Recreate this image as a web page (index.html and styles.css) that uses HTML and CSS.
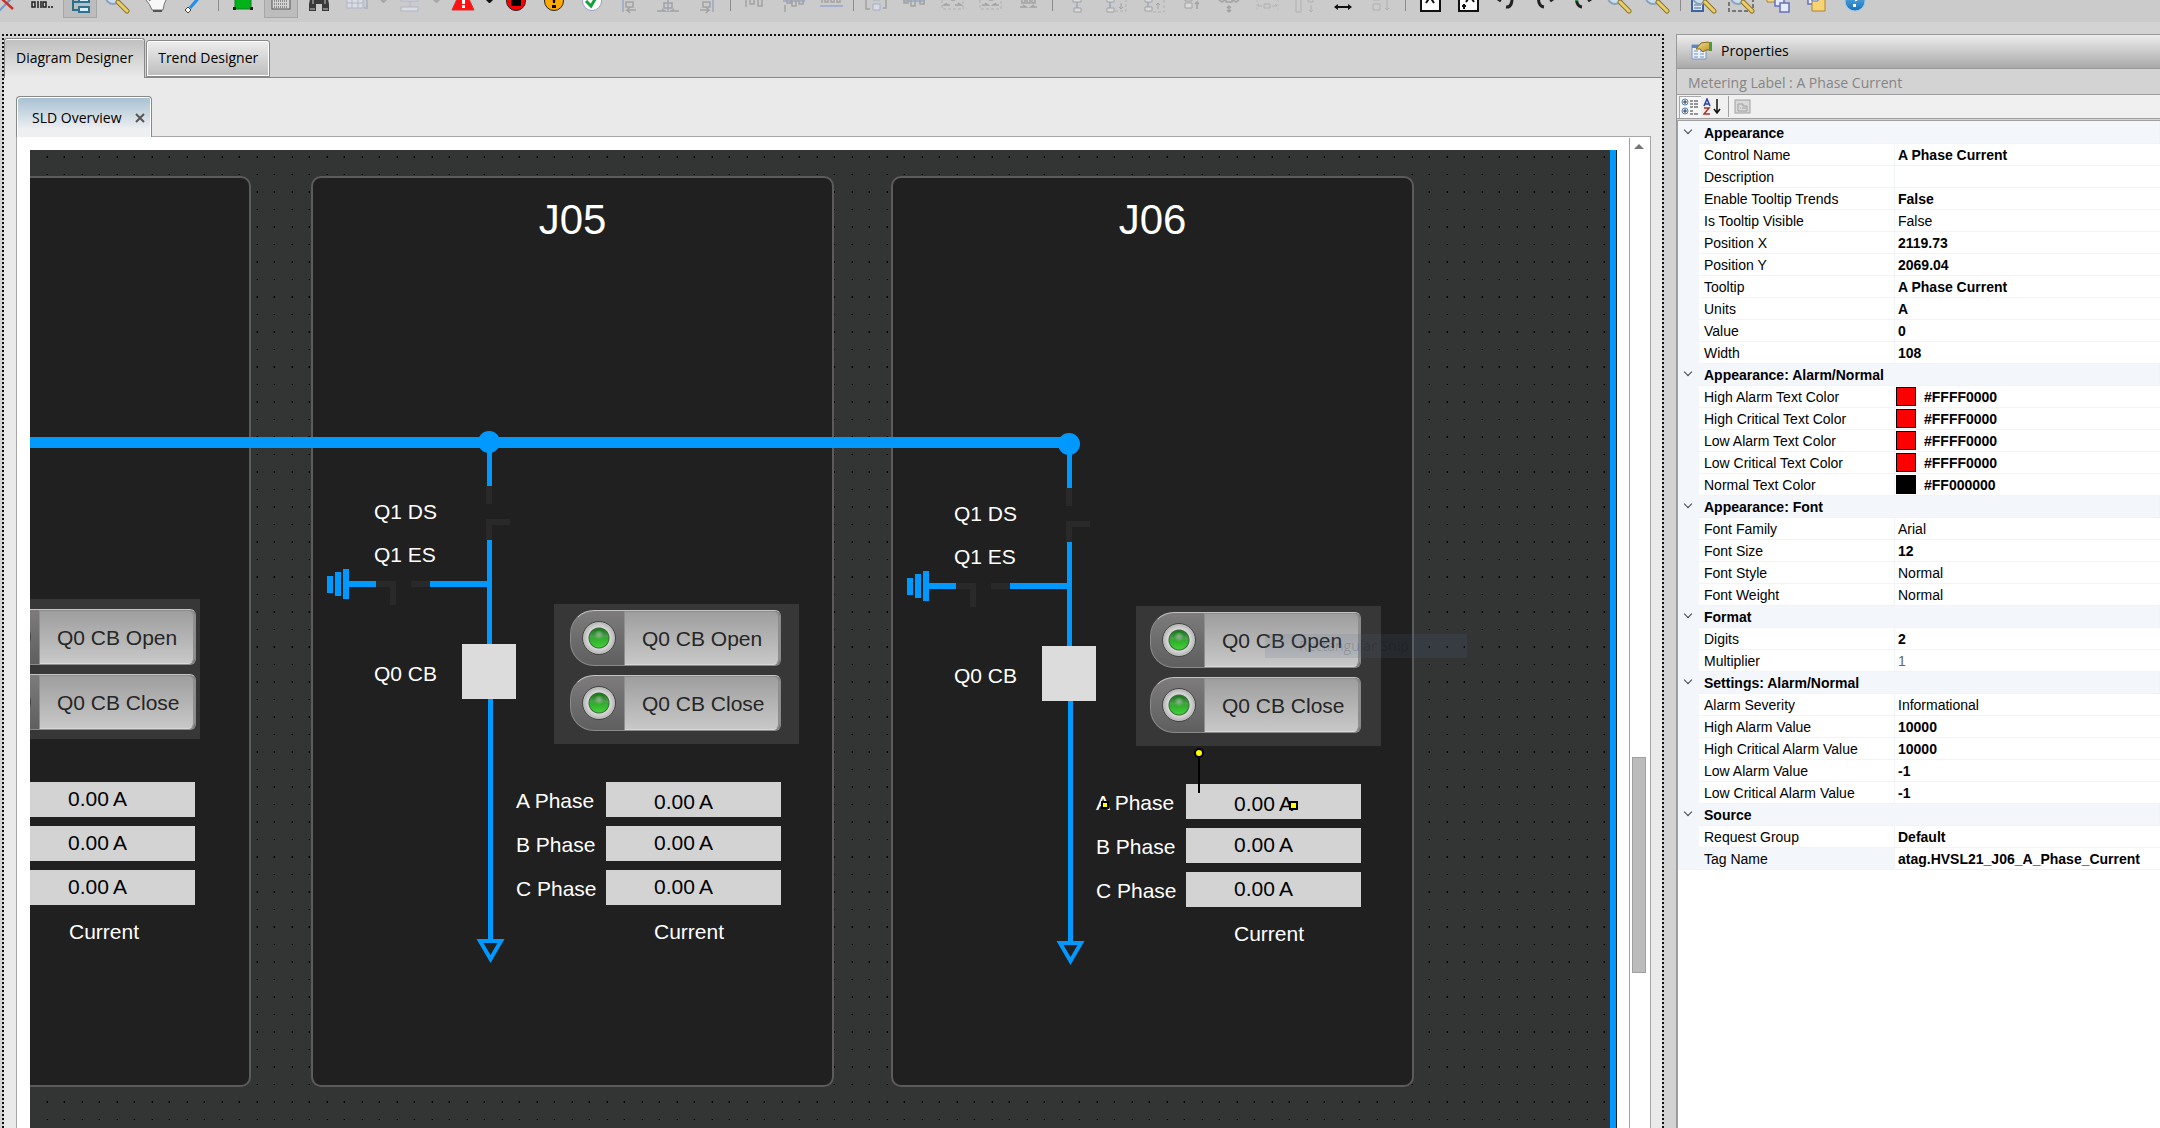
FILE: index.html
```html
<!DOCTYPE html>
<html lang="en">
<head>
<meta charset="utf-8">
<title>Diagram Designer</title>
<link rel="stylesheet" href="styles.css">
</head>
<body>
<svg class="defs" aria-hidden="true">
  <defs>
    <linearGradient id="gold" x1="0" y1="0" x2="1" y2="1"><stop offset="0" stop-color="#f3df8c"/><stop offset="1" stop-color="#b98f25"/></linearGradient>
    <linearGradient id="helpBlue" x1="0" y1="0" x2="0" y2="1"><stop offset="0" stop-color="#6db8ea"/><stop offset="1" stop-color="#1670b8"/></linearGradient>
    <g id="lens">
      <circle cx="9" cy="-3" r="7" fill="#c9def0" stroke="#8ea3b8" stroke-width="2"/>
      <path d="M14 2 L23 11" stroke="#8f7428" stroke-width="5" stroke-linecap="round"/>
      <path d="M14 2 L23 11" stroke="#e8cf6a" stroke-width="3" stroke-linecap="round"/>
    </g>
    <g id="page">
      <rect x="5" y="-14" width="19" height="25" fill="#fff" stroke="#111" stroke-width="2"/>
    </g>
    <g id="feeder" shape-rendering="crispEdges">
      <path class="off" d="M173 308h6v18h-6zM173 341h24v6h-18v15h-6zM98 403h19v6h-19zM63 403h20v24h-6v-18h-14z"/>
      <path class="live" d="M174 264h5v44h-5zM174 362h5v104h-5zM117 403h58v6h-58zM36 403h27v6h-27zM30 391h6v30h-6zM22 394h6v24h-6zM14 398h6v17h-6zM175 521h5v240h-5z"/>
      <rect class="breaker" x="149" y="466" width="54" height="55"/>
      <path class="arrow" d="M167 763h21l-10.500 18z" shape-rendering="auto"/>
    </g>
  </defs>
</svg>

<header class="toolbar" role="toolbar" aria-label="Diagram tools">
  <button class="tool" aria-label="Delete"><svg viewBox="0 0 28 22"><path d="M8 12L22 -2" stroke="#7a9cc8" stroke-width="2"/><path d="M12 -1L23 9" stroke="#c8312b" stroke-width="2.500"/><path d="M18 1l4-4" stroke="#888" stroke-width="2"/></svg></button>
  <button class="tool" aria-label="Bits"><svg viewBox="0 0 28 22"><g fill="none" stroke="#222" stroke-width="1.500"><rect x="4" y="2" width="3" height="5"/><path d="M10 1v7M13 1v7"/><rect x="15" y="2" width="3" height="5"/></g><path d="M20 6h2v2h-2zM23 6h2v2h-2z" fill="#444"/></svg></button>
  <button class="tool on" aria-label="Tree"><svg viewBox="0 0 28 22"><path d="M7 -4V10h6M7 2h6" fill="none" stroke="#2c6f8c" stroke-width="2"/><g fill="#d9eef5" stroke="#2c7391" stroke-width="2"><rect x="13" y="-3" width="10" height="5"/><rect x="13" y="7" width="10" height="5"/></g></svg></button>
  <button class="tool" aria-label="Find"><svg viewBox="0 0 28 22"><use href="#lens"/></svg></button>
  <button class="tool" aria-label="Pan"><svg viewBox="0 0 28 22"><path d="M4 0q2-2 4 1V-6H24V0q-2 3-3 10H10Q8 4 4 0z" fill="#f8f8f8" stroke="#777"/><path d="M11 11h9" stroke="#555" stroke-width="2"/></svg></button>
  <button class="tool" aria-label="Line"><svg viewBox="0 0 28 22"><path d="M10 8L22 -6" stroke="#1b8ff0" stroke-width="3"/><path d="M8 7l3 3-3 3-3-3z" fill="#fff" stroke="#444"/></svg></button>
  <span class="sep"></span>
  <button class="tool" aria-label="Shape"><svg viewBox="0 0 28 22"><path d="M6 -6h16V9H6z" fill="#00b21a" stroke="#157a20"/><path d="M4 7h3v3H4zM21 7h3v3h-3z" fill="#222"/></svg></button>
  <button class="tool on" aria-label="Grid"><svg viewBox="0 0 28 22"><rect x="5" y="-10" width="18" height="19" fill="#d4d4d4" stroke="#555"/><path d="M7 1h14M7 4h14M7 7h14" stroke="#444" stroke-dasharray="1 1"/></svg></button>
  <button class="tool" aria-label="Search"><svg viewBox="0 0 28 22"><path d="M6 -6h6v5h4v-5h6l2 10v7h-7V4h-6v7H4V4z" fill="#3a3a3a"/><path d="M5 9h5M18 9h5M8 0v4M20 0v4" stroke="#999" stroke-width="1.500"/></svg></button>
  <button class="tool dim" aria-label="Table"><svg viewBox="0 0 28 22"><path d="M4 -6h16V8H4zM4 3h16M9 -6V8M15 -6V8" fill="#dde1ea" stroke="#a9b1c4"/><path d="M24 -4v12h-3" stroke="#a9b1c4" fill="none" stroke-width="2"/></svg></button>
  <span class="drop"></span>
  <button class="tool dim" aria-label="Rows"><svg viewBox="0 0 28 22"><g fill="#dde1ea" stroke="#a9b1c4"><rect x="5" y="-3" width="17" height="4"/><rect x="5" y="7" width="17" height="4"/></g><path d="M14 1v6" stroke="#a9b1c4"/></svg></button>
  <span class="drop"></span>
  <button class="tool" aria-label="Alarm"><svg viewBox="0 0 28 22"><path d="M14 -14L25 10H3z" fill="#f11" stroke="#c33"/><path d="M13 -4h3v8h-3zM13 5h3v3h-3z" fill="#fff"/></svg></button>
  <span class="drop drop-strong"></span>
  <button class="tool" aria-label="Stop"><svg viewBox="0 0 28 22"><circle cx="14" cy="1" r="9.500" fill="#f00" stroke="#222"/><path d="M9 -3h10v9H9z"/></svg></button>
  <button class="tool" aria-label="Warning"><svg viewBox="0 0 28 22"><circle cx="14" cy="1" r="9.500" fill="#ffa800" stroke="#222"/><path d="M12 -8h4l-1 11h-2zM12 5h4v3h-4z"/></svg></button>
  <button class="tool" aria-label="Validate"><svg viewBox="0 0 28 22"><circle cx="14" cy="1" r="9.500" fill="#fff" stroke="#9b9bd0"/><path d="M8 1l5 5L19 -4" fill="none" stroke="#12a33a" stroke-width="3"/></svg></button>
  <button class="tool dim" aria-label="Align left"><svg viewBox="0 0 28 22"><path d="M7 -4V12" stroke="#9ac" stroke-width="2"/><path d="M10 2h7v5h-7zM20 10h-9l3-3M11 10l3 3" fill="none" stroke="#999" stroke-width="1.500"/></svg></button>
  <button class="tool dim" aria-label="Align centre"><svg viewBox="0 0 28 22"><path d="M14 -4V12" stroke="#9ac" stroke-width="2"/><path d="M10 3h8v5h-8zM3 11h8l-3-2M25 11h-8l3-2" fill="none" stroke="#999" stroke-width="1.500"/></svg></button>
  <button class="tool dim" aria-label="Align right"><svg viewBox="0 0 28 22"><path d="M21 -4V12" stroke="#9ac" stroke-width="2"/><path d="M11 2h7v5h-7zM8 10h9l-3-3M17 10l-3 3" fill="none" stroke="#999" stroke-width="1.500"/></svg></button>
  <span class="sep"></span>
  <button class="tool dim" aria-label="Align top"><svg viewBox="0 0 28 22"><path d="M5 -4V7M9 -6V4h4V-6M17 -6V6h4V-6" fill="none" stroke="#999" stroke-width="1.500"/></svg></button>
  <button class="tool dim" aria-label="Align middle"><svg viewBox="0 0 28 22"><path d="M4 1h22" stroke="#9ac" stroke-width="2"/><path d="M6 12V5M8 -4V3h4V-4M13 -4V6h4V-4M20 -4V4h4V-4" fill="none" stroke="#999" stroke-width="1.500"/></svg></button>
  <button class="tool dim" aria-label="Align bottom"><svg viewBox="0 0 28 22"><path d="M3 6h23" stroke="#9ac" stroke-width="2"/><path d="M5 -4V3M8 -4V2h3V-4M14 -4V2h3V-4M20 -4V2h3V-4" fill="none" stroke="#999" stroke-width="1.500"/></svg></button>
  <span class="sep tight"></span>
  <button class="tool dim" aria-label="Distribute"><svg viewBox="0 0 28 22"><path d="M11 4h7v6h-7zM11 -5h7v5h-7z" fill="#dde" stroke="#9ab"/><path d="M7 -4H4V9h4M21 8h3V-4" fill="none" stroke="#999" stroke-width="1.500"/></svg></button>
  <button class="tool dim" aria-label="Distribute across"><svg viewBox="0 0 28 22"><path d="M4 1h21" stroke="#9ac" stroke-width="2"/><path d="M4 -4V3h4V-4M11 -4V6h4V-4M20 -4V4h4V-4" fill="none" stroke="#999" stroke-width="1.500"/></svg></button>
  <button class="tool dim" aria-label="Space across"><svg viewBox="0 0 28 22"><path d="M4 0V9h21V0" fill="none" stroke="#aaa" stroke-dasharray="3 2"/><path d="M12 5H6l3-2M17 5h6l-3-2M13 0h4" fill="none" stroke="#999" stroke-width="1.500"/></svg></button>
  <button class="tool dim" aria-label="Space evenly"><svg viewBox="0 0 28 22"><path d="M4 0V9h21V0" fill="none" stroke="#aaa" stroke-dasharray="3 2"/><path d="M6 5h6l-3-2M23 5h-6l3-2M13 0h4" fill="none" stroke="#999" stroke-width="1.500"/></svg></button>
  <button class="tool dim" aria-label="Squeeze"><svg viewBox="0 0 28 22"><path d="M6 7h6l-3-2M23 7h-6l3-2M8 -3V3h3V-3M13 -3V3h3V-3M18 -3V3h3V-3" fill="none" stroke="#999" stroke-width="1.500"/></svg></button>
  <span class="sep"></span>
  <button class="tool dim" aria-label="Stack"><svg viewBox="0 0 28 22"><path d="M14 0v9" stroke="#9ac" stroke-width="2"/><path d="M10 -3h8v5h-8zM11 8h7v4h-7z" fill="#ddd" stroke="#999"/></svg></button>
  <button class="tool dim" aria-label="Stack down"><svg viewBox="0 0 28 22"><path d="M9 0v9" stroke="#9ac" stroke-width="2"/><path d="M6 -3h7v5H6zM6 8h7v4H6z" fill="#ddd" stroke="#999"/><path d="M14 11h11V0" fill="none" stroke="#aaa" stroke-dasharray="3 2"/><path d="M20 3v6l-2-2M20 9l2-2" fill="none" stroke="#999"/></svg></button>
  <button class="tool dim" aria-label="Stack up"><svg viewBox="0 0 28 22"><path d="M9 0v9" stroke="#9ac" stroke-width="2"/><path d="M6 -3h7v5H6zM6 7h7v4H6z" fill="#ddd" stroke="#999"/><path d="M14 12h11V0" fill="none" stroke="#aaa" stroke-dasharray="3 2"/><path d="M19 9V3l-2 2M19 3l2 2" fill="none" stroke="#999"/></svg></button>
  <button class="tool dim" aria-label="Raise"><svg viewBox="0 0 28 22"><path d="M8 3h7v5H8zM8 -3h7v4H8z" fill="#ddd" stroke="#999"/><path d="M20 9V2l-2 2M20 2l2 2" fill="none" stroke="#999" stroke-width="1.500"/></svg></button>
  <button class="tool dim" aria-label="Compress"><svg viewBox="0 0 28 22"><path d="M4 0l3 2 3-2M18 0l3 2 3-2M14 6v6M12 8l2-2 2 2M12 10l2 2 2-2M11 -2v4h6v-4" fill="none" stroke="#999" stroke-width="1.500"/></svg></button>
  <button class="tool dim" aria-label="Spread"><svg viewBox="0 0 28 22"><path d="M11 4h6v4h-6zM9 6H4l2-2M19 6h5l-2-2" fill="none" stroke="#aaa"/><path d="M4 0v10M25 0v10" stroke="#bbb" stroke-dasharray="2 2"/></svg></button>
  <button class="tool dim" aria-label="Same height"><svg viewBox="0 0 28 22"><path d="M5 -4h5V12H5zM17 -3h5v5h-5zM20 5v7l-2-2M20 12l2-2" fill="none" stroke="#aaa"/></svg></button>
  <button class="tool" aria-label="Same width"><svg viewBox="0 0 28 22"><path d="M6 7h16" stroke="#111" stroke-width="2"/><path d="M9 4v6L5 7zM19 4v6l4-3z" fill="#111"/></svg></button>
  <button class="tool dim" aria-label="Same size"><svg viewBox="0 0 28 22"><path d="M6 4h7v6H6zM6 -4v4h7M20 0v10l-2-2M20 10l2-2" fill="none" stroke="#aaa"/></svg></button>
  <span class="sep"></span>
  <button class="tool" aria-label="Text"><svg viewBox="0 0 28 22"><use href="#page"/><path d="M10 3l4-6 4 6" fill="none" stroke="#111" stroke-width="2"/></svg></button>
  <button class="tool" aria-label="Text position"><svg viewBox="0 0 28 22"><use href="#page"/><path d="M12 2l4-6 4 6M10 9V4M8 6h4" fill="none" stroke="#111" stroke-width="2"/></svg></button>
  <button class="tool" aria-label="Undo"><svg viewBox="0 0 28 22"><path d="M6 -1l3 2M14 7Q21 8 20 -6" fill="none" stroke="#222" stroke-width="3"/></svg></button>
  <button class="tool" aria-label="Redo"><svg viewBox="0 0 28 22"><path d="M23 -1l-3 2M14 7Q7 6 9 -6" fill="none" stroke="#222" stroke-width="3"/></svg></button>
  <button class="tool" aria-label="Repeat"><svg viewBox="0 0 28 22"><path d="M23 -1l-3 2M14 7Q7 6 9 -6" fill="none" stroke="#222" stroke-width="3"/><path d="M7 -2h3v3H7z" fill="#1a3"/></svg></button>
  <button class="tool" aria-label="Zoom in"><svg viewBox="0 0 28 22"><use href="#lens"/><path d="M9 -6v6M6 -3h6" stroke="#246" stroke-width="2"/></svg></button>
  <button class="tool" aria-label="Zoom out"><svg viewBox="0 0 28 22"><use href="#lens"/></svg></button>
  <span class="sep tight"></span>
  <button class="tool" aria-label="Zoom page"><svg viewBox="0 0 28 22"><path d="M3 -6h11V11H3z" fill="#dfe8fa" stroke="#3d62ad" stroke-width="2"/><path d="M5 5h7M5 8h7" stroke="#3d62ad"/><use href="#lens" x="2"/></svg></button>
  <button class="tool" aria-label="Zoom region"><svg viewBox="0 0 28 22"><path d="M2 -4V11h24V-4" fill="none" stroke="#777" stroke-width="2" stroke-dasharray="4 2"/><use href="#lens" x="2"/></svg></button>
  <button class="tool" aria-label="Send back"><svg viewBox="0 0 28 22"><path d="M2 -6h12v8H2z" fill="#f5d77c" stroke="#a8843a"/><path d="M10 -2h9v8h-9z" fill="#e5eafc" stroke="#6672b5" stroke-width="1.500"/><path d="M15 3h9v9h-9z" fill="#e5eafc" stroke="#6672b5" stroke-width="1.500"/></svg></button>
  <button class="tool" aria-label="Bring front"><svg viewBox="0 0 28 22"><path d="M5 -6h9v10H5z" fill="#eef" stroke="#6672b5" stroke-width="1.500"/><path d="M9 -4h13v15H9z" fill="#f7d473" stroke="#a8843a"/><path d="M9 -6h6v7H9z" fill="#eef" stroke="#6672b5"/></svg></button>
  <button class="tool" aria-label="Help"><svg viewBox="0 0 28 22"><circle cx="14" cy="1" r="10" fill="url(#helpBlue)" stroke="#9cc9ec"/><path d="M11 -5q5-3 6 1q0 3-3 4" fill="none" stroke="#fff" stroke-width="3"/><path d="M12 4h3v3h-3z" fill="#fff"/></svg></button>
</header>

<main class="workbench">
  <section class="designer">
    <div class="tabs" role="tablist">
      <button class="tab active" role="tab" aria-selected="true">Diagram Designer</button>
      <button class="tab" role="tab">Trend Designer</button>
    </div>
    <div class="documents">
      <div class="doc-tab"><span>SLD Overview</span>
        <button class="close" aria-label="Close SLD Overview"><svg viewBox="0 0 10 10"><path d="M1 1l8 8M9 1l-8 8" stroke="#555" stroke-width="2"/></svg></button>
      </div>
      <div class="pane">
        <div class="canvas">
          <svg class="layer" aria-hidden="true">
            <pattern id="dots" width="35" height="35" patternUnits="userSpaceOnUse"><path d="M17 6h1v2h-1zM34 6h1v2h-1zM17 24h1v1h-1zM34 24h1v1h-1z" fill="#000"/><path d="M16 6h1v2h-1zM33 6h1v2h-1zM16 24h1v1h-1zM33 24h1v1h-1z" fill="#222"/></pattern>
            <rect width="100%" height="100%" fill="url(#dots)"/>
          </svg>

          <article class="bay bay-j04">
            <div class="commands">
              <button class="command"><i class="lamp"></i><span>Q0 CB Open</span></button>
              <button class="command"><i class="lamp"></i><span>Q0 CB Close</span></button>
            </div>
            <div class="readings">
              <span></span><output><b>0.00</b><b>A</b></output>
              <span></span><output><b>0.00</b><b>A</b></output>
              <span></span><output><b>0.00</b><b>A</b></output>
            </div>
            <span class="label label-current">Current</span>
          </article>

          <article class="bay bay-j05">
            <h2>J05</h2>
            <div class="equipment">
              <svg class="layer" aria-hidden="true"><use href="#feeder"/></svg>
              <span class="label label-ds">Q1 DS</span>
              <span class="label label-es">Q1 ES</span>
              <span class="label label-cb">Q0 CB</span>
              <div class="commands">
                <button class="command"><i class="lamp"></i><span>Q0 CB Open</span></button>
                <button class="command"><i class="lamp"></i><span>Q0 CB Close</span></button>
              </div>
              <div class="readings">
                <span>A Phase</span><output class="lowered"><b>0.00</b><b>A</b></output>
                <span>B Phase</span><output><b>0.00</b><b>A</b></output>
                <span>C Phase</span><output><b>0.00</b><b>A</b></output>
              </div>
              <span class="label label-current">Current</span>
            </div>
          </article>

          <article class="bay bay-j06">
            <h2>J06</h2>
            <div class="equipment">
              <svg class="layer" aria-hidden="true"><use href="#feeder"/></svg>
              <span class="label label-ds">Q1 DS</span>
              <span class="label label-es">Q1 ES</span>
              <span class="label label-cb">Q0 CB</span>
              <div class="commands">
                <button class="command"><i class="lamp"></i><span>Q0 CB Open</span></button>
                <button class="command"><i class="lamp"></i><span>Q0 CB Close</span></button>
              </div>
              <div class="readings">
                <span>A Phase</span><output class="lowered"><b>0.00</b><b>A</b></output>
                <span>B Phase</span><output><b>0.00</b><b>A</b></output>
                <span>C Phase</span><output><b>0.00</b><b>A</b></output>
              </div>
              <span class="label label-current">Current</span>
            </div>
          </article>

          <svg class="layer" aria-hidden="true">
            <path class="live" d="M0 287h1039v11H0z"/>
            <circle class="live" cx="459" cy="292" r="11"/>
            <circle class="live" cx="1039" cy="294" r="11"/>
            <path d="M1168 607h2v36h-2z"/>
            <g fill="#ff0" stroke="#000" stroke-width="2">
              <circle cx="1169" cy="603" r="4"/>
              <rect x="1072" y="652" width="6" height="6"/>
              <rect x="1260" y="652" width="7" height="7"/>
            </g>
          </svg>
          <div class="ghost">Rectangular Snip</div>
        </div>
        <div class="scrollbar"><i class="up"></i><i class="thumb"></i></div>
      </div>
    </div>
  </section>

  <aside class="properties">
    <header class="properties-title">
      <svg viewBox="0 0 22 20" width="22" height="20"><path d="M1 4h14v14H1z" fill="#eaf1fb" stroke="#7c93bd"/><path d="M1 4h14v3H1z" fill="#5d86c9"/><path d="M3 10h4M9 10h4M3 13h4M9 13h4M3 16h4M9 16h4" stroke="#9ab0d2" stroke-width="1.500"/><path d="M5 8l5-6 7-1 3 2v6h-5l-3 2-3-3z" fill="url(#gold)" stroke="#8a6a14"/><path d="M18 1h3v9h-3z" fill="#4a9c3a"/></svg>
      Properties
    </header>
    <p class="selection">Metering Label : A Phase Current</p>
    <div class="properties-tools">
      <button class="ptool pressed" aria-label="Categorized"><svg viewBox="0 0 18 18" width="18" height="18"><g fill="#fff" stroke="#4a7ebb"><circle cx="4" cy="4" r="3"/><circle cx="4" cy="13" r="3"/></g><path d="M2 4h4M4 2v4M2 13h4M4 11v4M9 3h3M9 6h3M9 9h3M9 13h3M9 16h3M13 3h4M13 6h4M13 9h4M13 16h4" stroke="#333"/></svg></button>
      <button class="ptool" aria-label="Alphabetical"><svg viewBox="0 0 18 18" width="18" height="18"><path d="M1 8l3-7 3 7M2 6h4" fill="none" stroke="#2a3fa8" stroke-width="1.500"/><path d="M1 10h5l-5 6h6" fill="none" stroke="#a8322a" stroke-width="1.500"/><path d="M14 1v14M11 11l3 4 3-4" fill="none" stroke="#111" stroke-width="1.500"/></svg></button>
      <span class="ptool-sep"></span>
      <button class="ptool" aria-label="Property pages"><svg viewBox="0 0 18 18" width="18" height="18"><rect x="1" y="2" width="15" height="13" fill="#d9d9d9" stroke="#a0a0a0"/><path d="M4 6h5v2h4v5H4zM6 10h1M8 10h4" fill="none" stroke="#a0a0a0"/></svg></button>
    </div>
    <div class="grid-wrap">
      <table class="grid">
        <colgroup><col class="gutter"><col class="name"><col></colgroup>
        <tbody>
          <tr class="cat"><td><i class="chevron"></i></td><th colspan="2">Appearance</th></tr>
          <tr><td></td><th>Control Name</th><td><b>A Phase Current</b></td></tr>
          <tr><td></td><th>Description</th><td></td></tr>
          <tr><td></td><th>Enable Tooltip Trends</th><td><b>False</b></td></tr>
          <tr><td></td><th>Is Tooltip Visible</th><td>False</td></tr>
          <tr><td></td><th>Position X</th><td><b>2119.73</b></td></tr>
          <tr><td></td><th>Position Y</th><td><b>2069.04</b></td></tr>
          <tr><td></td><th>Tooltip</th><td><b>A Phase Current</b></td></tr>
          <tr><td></td><th>Units</th><td><b>A</b></td></tr>
          <tr><td></td><th>Value</th><td><b>0</b></td></tr>
          <tr><td></td><th>Width</th><td><b>108</b></td></tr>
        </tbody>
        <tbody>
          <tr class="cat"><td><i class="chevron"></i></td><th colspan="2">Appearance: Alarm/Normal</th></tr>
          <tr><td></td><th>High Alarm Text Color</th><td class="color"><i class="swatch red"></i><b>#FFFF0000</b></td></tr>
          <tr><td></td><th>High Critical Text Color</th><td class="color"><i class="swatch red"></i><b>#FFFF0000</b></td></tr>
          <tr><td></td><th>Low Alarm Text Color</th><td class="color"><i class="swatch red"></i><b>#FFFF0000</b></td></tr>
          <tr><td></td><th>Low Critical Text Color</th><td class="color"><i class="swatch red"></i><b>#FFFF0000</b></td></tr>
          <tr><td></td><th>Normal Text Color</th><td class="color"><i class="swatch"></i><b>#FF000000</b></td></tr>
        </tbody>
        <tbody>
          <tr class="cat"><td><i class="chevron"></i></td><th colspan="2">Appearance: Font</th></tr>
          <tr><td></td><th>Font Family</th><td>Arial</td></tr>
          <tr><td></td><th>Font Size</th><td><b>12</b></td></tr>
          <tr><td></td><th>Font Style</th><td>Normal</td></tr>
          <tr><td></td><th>Font Weight</th><td>Normal</td></tr>
        </tbody>
        <tbody>
          <tr class="cat"><td><i class="chevron"></i></td><th colspan="2">Format</th></tr>
          <tr><td></td><th>Digits</th><td><b>2</b></td></tr>
          <tr><td></td><th>Multiplier</th><td class="readonly">1</td></tr>
        </tbody>
        <tbody>
          <tr class="cat"><td><i class="chevron"></i></td><th colspan="2">Settings: Alarm/Normal</th></tr>
          <tr><td></td><th>Alarm Severity</th><td>Informational</td></tr>
          <tr><td></td><th>High Alarm Value</th><td><b>10000</b></td></tr>
          <tr><td></td><th>High Critical Alarm Value</th><td><b>10000</b></td></tr>
          <tr><td></td><th>Low Alarm Value</th><td><b>-1</b></td></tr>
          <tr><td></td><th>Low Critical Alarm Value</th><td><b>-1</b></td></tr>
        </tbody>
        <tbody>
          <tr class="cat"><td><i class="chevron"></i></td><th colspan="2">Source</th></tr>
          <tr><td></td><th>Request Group</th><td><b>Default</b></td></tr>
          <tr class="current"><td></td><th>Tag Name</th><td><b>atag.HVSL21_J06_A_Phase_Current</b></td></tr>
        </tbody>
      </table>
    </div>
  </aside>
</main>
</body>
</html>
```

FILE: styles.css
```css
* { box-sizing: border-box; }

body {
  margin: 0;
  height: 100vh;
  display: flex;
  flex-direction: column;
  overflow: hidden;
  background: #d3d3d3;
  color: #000;
  font: 14px/20px "Open Sans", "Noto Sans", sans-serif;
}

button { font: inherit; color: inherit; padding: 0; border: 0; background: none; }
.defs { position: absolute; width: 0; height: 0; }

/* Toolbar */
.toolbar {
  flex: none;
  display: flex;
  align-items: flex-start;
  height: 22px;
  padding-right: 8px;
  overflow: hidden;
  background: #cbcbcb;
}
.tool { flex: none; width: 34px; height: 18px; margin: 0 2px; display: flex; justify-content: center; }
.tool:first-child { margin-left: -13px; }
.tool svg { flex: none; width: 28px; height: 22px; }
.tool.on { background: #bdbdbd; box-shadow: inset 1px 0 #a6a6a6, inset -1px -1px #a6a6a6; }
.dim { opacity: .8; }
.sep { flex: none; width: 1px; height: 11px; margin: 0 5px; background: #8c8c8c; }
.sep.tight { margin: 0 3px; }
.drop { flex: none; width: 7px; margin: 0 4px; border: solid transparent; border-width: 0 3px; border-top: 3px solid #a8a8a8; }
.drop-strong { border-top-color: #111; }

/* Main split */
.workbench { flex: 1; min-height: 0; display: flex; gap: 12px; padding: 12px 0 0 2px; }
.designer {
  flex: 1;
  min-width: 0;
  display: flex;
  flex-direction: column;
  border: 2px dotted #111;
  border-width: 2px 2px 0 2px;
}
.tabs { flex: none; display: flex; align-items: flex-end; gap: 1px; height: 42px; border-bottom: 1px solid #888; }
.tab {
  height: 37px;
  padding: 0 11px 2px;
  border: 1px solid #888;
  border-radius: 3px 3px 0 0;
  background: linear-gradient(#eee, #bcbcbc);
  box-shadow: inset 0 0 0 1px #fff;
}
.tab.active { height: 40px; margin-bottom: -1px; border-bottom: 0; background: linear-gradient(#bfbfbf, #eaeaea); box-shadow: inset 0 1px #fff; }

.documents { flex: 1; min-height: 0; display: flex; flex-direction: column; padding: 18px 11px 0 12px; background: #eaeaea; }
.doc-tab {
  flex: none;
  align-self: flex-start;
  position: relative;
  display: flex;
  align-items: center;
  gap: 14px;
  height: 41px;
  margin-bottom: -1px;
  padding: 2px 6px 0 15px;
  border: 1px solid #888;
  border-bottom: 0;
  border-radius: 4px 4px 0 0;
  background: linear-gradient(#a6c0d2, #eeeff0 80%);
  box-shadow: inset 1px 1px #fff, inset -1px 0 #fff;
}
.close { display: flex; }
.close svg { width: 10px; height: 10px; }

.pane { flex: 1; min-height: 0; display: flex; gap: 13px; padding-left: 13px; border: 1px solid #a6a6a6; border-bottom: 0; background: #fff; }
.scrollbar { position: relative; flex: none; width: 21px; margin-top: 1px; border-left: 1px solid #a0a0a0; }
.up { position: absolute; top: 6px; left: 4px; border: 5px solid transparent; border-top: 0; border-bottom-color: #777; }
.thumb { position: absolute; top: 619px; left: 2px; width: 14px; height: 216px; border: 1px solid #a0a0a0; background: #bcbcbc; }

/* Drawing surface: its items are placed by their own coordinates */
.canvas {
  position: relative;
  flex: 1;
  min-width: 0;
  margin-top: 13px;
  overflow: hidden;
  background: #333535;
  border-right: 6px solid #0099ff;
  box-shadow: 1px 0 #222;
  font-family: "Liberation Sans", Arial, sans-serif;
  font-size: 21px;
  line-height: 24px;
}
.layer { position: absolute; inset: 0; width: 100%; height: 100%; }
.live { fill: #0099ff; }
.off { fill: #292929; }
.breaker { fill: #dcdcdc; }
.arrow { fill: none; stroke: #0099ff; stroke-width: 4; }

.bay { position: absolute; top: 26px; width: 523px; height: 911px; border: 2px solid #5b5b5b; border-radius: 10px; background: #202020; color: #fff; }
.bay-j04 { left: -302px; }
.bay-j05 { left: 281px; }
.bay-j06 { left: 861px; }
.bay h2 { margin: 18px 0 0; font-size: 42px; line-height: 48px; font-weight: 400; text-align: center; }
.equipment { position: absolute; inset: 0; }
.bay-j06 .equipment { top: 2px; }

.label { position: absolute; white-space: nowrap; }
.label-ds { left: 61px; top: 322px; }
.label-es { left: 61px; top: 365px; }
.label-cb { left: 61px; top: 484px; }
.label-current { left: 341px; top: 742px; }
.bay-j04 .label-current { left: 339px; }

.commands {
  position: absolute;
  left: 241px;
  top: 426px;
  width: 245px;
  height: 140px;
  padding: 6px 0 0 16px;
  display: flex;
  flex-direction: column;
  gap: 9px;
  background: #373737;
}
.bay-j04 .commands { left: 225px; top: 421px; padding: 10px 0 0 30px; }
.bay-j06 .commands { left: 243px; padding-left: 14px; }
.command {
  display: flex;
  align-items: center;
  width: 211px;
  height: 56px;
  overflow: hidden;
  border: 1px solid #8a8a8a;
  border-top-color: #c4c4c4;
  border-radius: 24px 6px 6px 24px;
  background: linear-gradient(#7d7b7b, #5f5f5f);
  color: #262626;
}
.command span {
  flex: 1;
  align-self: stretch;
  padding-left: 17px;
  border: 1px solid #8e8e8e;
  border-width: 1px 2px 1px 1px;
  border-bottom-color: #d8d8d8;
  border-radius: 0 6px 6px 0;
  background: linear-gradient(#9e9e9e, #c8c8c8);
  text-align: left;
  line-height: 54px;
}
.lamp {
  flex: none;
  width: 34px;
  height: 34px;
  margin: 0 8px 0 11px;
  border: 1px solid #454545;
  border-radius: 50%;
  background: radial-gradient(circle at 50% 40%, #7fae7f 0 1px, transparent 5px), radial-gradient(circle, transparent 0 9px, #3f6b3f 10px, #d8d8d8 11px, #bcbcbc 15px), linear-gradient(#1d7d1d 25%, #4aa04a 45%, #2fae2a 52%, #43cf3c 80%);
}

.readings { position: absolute; left: 202px; top: 604px; display: grid; grid-template-columns: 91px 175px; gap: 9px 0; align-items: center; }
.bay-j04 .readings { left: 199px; }
.readings span { padding: 2px 0 0 1px; }
.readings output { display: flex; gap: 4px; height: 35px; padding: 5px 0 0 48px; background: #d3d3d3; color: #000; }
.readings output.lowered { padding-top: 8px; }
.readings b { font-weight: 400; }

.ghost {
  position: absolute;
  left: 1235px;
  top: 484px;
  width: 202px;
  height: 24px;
  padding-left: 34px;
  background: rgba(80, 105, 140, .14);
  color: rgba(0, 0, 0, .16);
  font: 14px/24px "Open Sans", "Noto Sans", sans-serif;
}

/* Properties */
.properties { flex: none; width: 484px; display: flex; flex-direction: column; border-left: 1px solid #999; }
.properties-title {
  flex: none;
  display: flex;
  align-items: center;
  gap: 8px;
  height: 35px;
  padding: 0 0 2px 14px;
  border: solid #999;
  border-width: 1px 0;
  background: linear-gradient(#ececec, #a9a9a9);
}
.selection { margin: 0; height: 25px; padding: 4px 0 0 11px; color: #858585; }
.properties-tools { flex: none; display: flex; align-items: center; height: 25px; padding-left: 2px; border: solid #a0a0a0; border-width: 1px 0; background: #f0f0f0; }
.ptool { display: flex; align-items: center; justify-content: center; width: 22px; height: 22px; }
.ptool.pressed { background: #f8f8f8; box-shadow: inset 1px 1px #a8a8a8; }
.ptool-sep { width: 1px; height: 21px; margin: 0 3px 0 5px; background: #a0a0a0; }

.grid-wrap { flex: 1; min-height: 0; margin-top: 1px; border: solid #a0a0a0; border-width: 1px 0 0 1px; background: #fff; font: 14px/16px "Liberation Sans", Arial, sans-serif; }
.grid { width: 100%; border-collapse: separate; border-spacing: 0; table-layout: fixed; border-top: 1px solid #f3f6fb; }
.gutter { width: 21px; }
.name { width: 196px; }
.grid tr { height: 22px; }
.grid th, .grid td { height: 22px; padding: 0 0 0 5px; border-bottom: 1px solid #f0f3f7; text-align: left; font-weight: 400; white-space: nowrap; }
.grid th { border-right: 1px solid #f0f3f7; }
.grid td:last-child { padding-left: 3px; }
.grid td:first-child, .cat th, .current th { background: #f3f6fb; }
.grid .cat th { font-weight: 700; }
.grid td:first-child { border-bottom-color: #f3f6fb; }
.chevron { display: block; width: 6px; height: 6px; margin: -5px 0 0 2px; border: solid #444; border-width: 0 1px 1px 0; transform: rotate(45deg); }
.grid td.color { padding-left: 1px; }
.color b { vertical-align: middle; }
.swatch { display: inline-block; width: 20px; height: 19px; margin-right: 8px; border: 1px solid #000; background: #000; vertical-align: middle; }
.swatch.red { background: #f00; }
.readonly { color: #666; }
```
